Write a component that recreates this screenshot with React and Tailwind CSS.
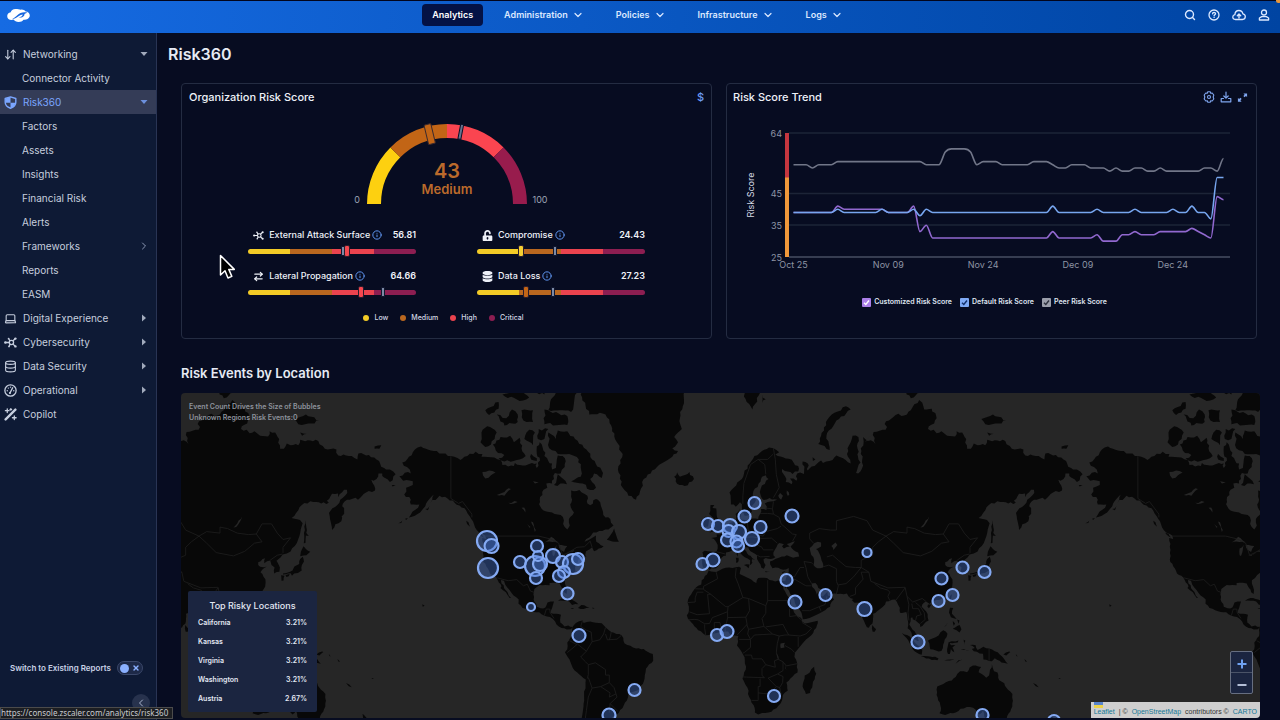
import React, { useState } from 'react';
import { ArrowDownUp, ArrowRightLeft, ChevronDown, ChevronLeft, ChevronRight, Database, Info, Laptop, Search, X } from 'lucide-react';
import { FaDatabase, FaUnlockAlt } from 'react-icons/fa';

/* ---------- icons ---------- */

function ZLogo() {
  return (
    <svg viewBox="0 0 24 16" className="h-4 w-6">
      <path
        fill="#fff"
        d="M9.500 1C6.800 1 5.200 2.400 4.700 4.200 2.600 4.500 1.200 6 1.200 8c0 2.500 1.800 4 4.300 4 .8 0 1.500-.2 2.100-.5.9 1.600 2.800 2.500 5 2.500 2.200 0 3.900-.8 4.900-2.200 3.300.1 6.300-1.400 6.300-4.300 0-2.300-1.800-4-4.200-4C18.300 2 16.700 1.300 14.900 1.700 13.500 1.200 11.600 1 9.500 1z"
      />
      <path fill="#1767df" d="M21.500 4.700c-4.200-1-7.700.1-10.200 2.600-1.500 1.500-3 2.800-5.300 4 2.900-.5 5-1.700 6.900-3.300 1.200-1 2.400-1.500 3.900-1.600-.3 1.500-1.800 2.500-4.300 3.200 3.300.2 6-.9 6-3.700 1-.6 1.800-.9 3-1.200z" />
    </svg>
  );
}

function ShieldIcon({ className }) {
  return (
    <svg viewBox="0 0 12 12" className={className} fill="none" stroke="currentColor">
      <path d="M6 .8 10.900 2.300v3.500c0 2.700-1.900 4.500-4.900 5.500C3 10.300 1.100 8.500 1.100 5.800V2.300z" strokeWidth="1.300" strokeLinejoin="round" />
      <path d="M6 1v5.200H1.300V2.500zM6 6.200h4.600C10.300 8.600 8.600 10.200 6 11z" fill="currentColor" stroke="none" />
    </svg>
  );
}

function NodesIcon({ className }) {
  return (
    <svg viewBox="0 0 14 12" className={className} fill="none" stroke="currentColor" strokeWidth="1.400">
      <circle cx="8" cy="6" r="2.300" />
      <path d="M1.500 6h4.300M9.500 4.400 12 2M9.500 7.600l2.500 2.300M6.600 4.300 5.200 2.300M6.700 7.700 5.600 9.800" />
      <g fill="currentColor" stroke="none">
        <circle cx="1.500" cy="6" r="1.400" />
        <circle cx="12.300" cy="1.800" r="1.300" />
        <circle cx="12.300" cy="10.200" r="1.300" />
        <circle cx="5" cy="1.900" r="1" />
        <circle cx="5.400" cy="10.200" r="1" />
      </g>
    </svg>
  );
}

function DialIcon({ className }) {
  return (
    <svg viewBox="0 0 12 12" className={className} fill="none" stroke="currentColor" strokeLinecap="round">
      <circle cx="6" cy="6" r="5.200" strokeWidth="1.200" />
      <path d="M5.500 8.300 8 3.500M3 6.300h.01M4 3.800h.01M6 2.900h.01M9 6.300h.01" strokeWidth="1.300" />
      <circle cx="5.500" cy="8.300" r="1" fill="currentColor" stroke="none" />
    </svg>
  );
}

function WandIcon({ className }) {
  return (
    <svg viewBox="0 0 12 12" className={className} fill="none" stroke="currentColor" strokeLinecap="round">
      <path d="M1.500 10.500 10.500 1.500" strokeWidth="2.200" />
      <path d="M3 .8v3.400M1.300 2.500h3.400M9.500 7.300v3.400M7.800 9h3.400M6.300.6v1.400M5.600 1.300H7" strokeWidth="1.200" />
    </svg>
  );
}

function HelpIcon({ className }) {
  return (
    <svg viewBox="0 0 12 12" className={className} fill="none" stroke="currentColor" strokeLinecap="round">
      <circle cx="6" cy="6" r="5" strokeWidth="1.300" />
      <path d="M4.600 4.800c0-1.900 2.900-1.800 2.900-.1 0 1-1.400 1.100-1.400 2.100M6.100 8.400h.01" strokeWidth="1.400" />
    </svg>
  );
}

function CloudUpIcon({ className }) {
  return (
    <svg viewBox="0 0 14 12" className={className} fill="none" stroke="currentColor" strokeWidth="1.300" strokeLinecap="round" strokeLinejoin="round">
      <path d="M3.500 10.500C1.900 10.500.8 9.500.8 8.100c0-1.300.9-2.200 2.100-2.400C3 3.300 4.600 1.500 6.900 1.500c2.100 0 3.600 1.300 4 3.300 1.500.3 2.400 1.400 2.400 2.800 0 1.700-1.200 2.900-2.900 2.900z" />
      <path d="M7 9V5.200M5.300 6.700 7 5l1.700 1.700" strokeWidth="1.400" />
    </svg>
  );
}

function UserIcon({ className }) {
  return (
    <svg viewBox="0 0 12 12" className={className} fill="none" stroke="currentColor" strokeWidth="1.300" strokeLinejoin="round">
      <circle cx="6" cy="3.500" r="2.500" />
      <path d="M3.700 7.600h4.600l2.300 1.400v2H1.400V9z" />
    </svg>
  );
}

function GearIcon({ className }) {
  return (
    <svg viewBox="0 0 12 12" className={className} fill="none" stroke="currentColor" strokeWidth="1.100" strokeLinejoin="round">
      <path d="M4.800.8h2.400l.5 1.400 1.500-.2 1.600 2L10.200 6l.6 2-1.600 2-1.500-.2-.5 1.400H4.800l-.5-1.400-1.500.2-1.600-2 .6-2-.6-2 1.600-2 1.500.2z" />
      <circle cx="6" cy="6" r="1.500" />
    </svg>
  );
}

function DownloadIcon({ className }) {
  return (
    <svg viewBox="0 0 12 12" className={className} fill="none" stroke="currentColor" strokeWidth="1.200" strokeLinecap="round" strokeLinejoin="round">
      <path d="M6 1v6M3.800 5 6 7.200 8.200 5M3.500 7.500H1.200v3.300h9.600V7.500H8.500" />
    </svg>
  );
}

function ExpandIcon({ className }) {
  return (
    <svg viewBox="0 0 12 12" className={className}>
      <path fill="currentColor" d="M7 1.500h4v4L9.700 4.300 8.300 5.700 6.900 4.300 8.300 2.900zM5 10.500H1v-4l1.300 1.200 1.400-1.400 1.400 1.400L3.700 9.100z" />
    </svg>
  );
}

/* ---------- header ---------- */

const MENUS = ['Administration', 'Policies', 'Infrastructure', 'Logs'];

function Header() {
  return (
    <header className="flex h-[33px] items-center border-t border-[#02051c] bg-linear-to-r from-[#166be3] to-[#0044a2] px-1.5 pb-[5px] text-[#dbe8ff]">
      <div className="flex-1">
        <a href="#home" aria-label="Home" className="inline-block align-middle">
          <ZLogo />
        </a>
      </div>
      <nav className="flex items-center gap-[10px] text-[9px] font-semibold">
        <button className="h-[22px] rounded bg-[#041245] px-[10px] text-white">Analytics</button>
        {MENUS.map((m) => (
          <button key={m} className="flex h-[22px] items-center gap-1 px-[11px]">
            {m}
            <ChevronDown size={12} strokeWidth={2.4} />
          </button>
        ))}
      </nav>
      <div className="flex flex-1 items-center justify-end gap-3 pr-1">
        <button aria-label="Search"><Search size={12} strokeWidth={2.8} /></button>
        <button aria-label="Help"><HelpIcon className="size-3" /></button>
        <button aria-label="Upload"><CloudUpIcon className="h-3 w-[14px]" /></button>
        <button aria-label="Account"><UserIcon className="size-3" /></button>
      </div>
    </header>
  );
}

/* ---------- sidebar ---------- */

const NAV = [
  { label: 'Networking', icon: ArrowDownUp, caret: 'down' },
  { label: 'Connector Activity', sub: true },
  { label: 'Risk360', icon: ShieldIcon, caret: 'down', active: true },
  { label: 'Factors', sub: true },
  { label: 'Assets', sub: true },
  { label: 'Insights', sub: true },
  { label: 'Financial Risk', sub: true },
  { label: 'Alerts', sub: true },
  { label: 'Frameworks', sub: true, caret: 'chevron' },
  { label: 'Reports', sub: true },
  { label: 'EASM', sub: true },
  { label: 'Digital Experience', icon: Laptop, caret: 'right' },
  { label: 'Cybersecurity', icon: NodesIcon, caret: 'right' },
  { label: 'Data Security', icon: Database, caret: 'right' },
  { label: 'Operational', icon: DialIcon, caret: 'right' },
  { label: 'Copilot', icon: WandIcon },
];

function Caret({ kind }) {
  if (kind === 'chevron') return <ChevronRight size={12} className="text-[#8d99b5]" />;
  return (
    <svg viewBox="0 0 8 8" className="mr-0.5 size-2" fill="currentColor" opacity=".8">
      {kind === 'down' ? <path d="M.5 2h7L4 6z" /> : <path d="M2 .5v7L6 4z" />}
    </svg>
  );
}

function Sidebar() {
  const [existing, setExisting] = useState(false);
  return (
    <aside className="relative flex w-[157px] shrink-0 flex-col border-r border-[#293454] bg-[#0e1a35] pt-[9px]">
      <nav>
        {NAV.map(({ label, icon: Icon, caret, active, sub }) => (
          <a
            key={label}
            href={'#' + label}
            className={
              'flex h-6 items-center pr-1.5 pl-1 text-[10px] ' +
              (active ? 'bg-[#343c57] text-[#7ba6ff]' : 'text-[#c6cede]')
            }
          >
            {!sub && <Icon className="mr-[6px] h-[13px] w-[13px]" />}
            <span className={'flex-1 ' + (sub ? 'pl-[18px]' : '')}>{label}</span>
            {caret && <Caret kind={caret} />}
          </a>
        ))}
      </nav>
      <label className="mt-auto mb-11 flex h-4 items-center gap-1.5 pl-[10px] text-[8px] font-semibold text-[#c9d2e6]">
        Switch to Existing Reports
        <span className="relative flex h-[14px] w-[26px] items-center rounded-full border border-[#3a4769] bg-[#1d2948]">
          <input
            type="checkbox"
            role="switch"
            checked={existing}
            onChange={(e) => setExisting(e.target.checked)}
            className="ml-0.5 size-[9px] appearance-none rounded-full bg-[#8ab0ff]"
          />
          <X size={8} strokeWidth={4} className="ml-[3px] text-[#8ab0ff]" />
        </span>
      </label>
      <button
        aria-label="Collapse menu"
        className="absolute right-1.5 bottom-2 flex size-[18px] items-center justify-center rounded-full bg-[#27324d] text-[#aab4cc]"
      >
        <ChevronLeft size={12} />
      </button>
    </aside>
  );
}

/* ---------- organization risk score ---------- */

const GX = 447;
const GY = 204;

function polar(pct, r) {
  const a = Math.PI * (1 - pct / 100);
  return [GX + r * Math.cos(a), GY - r * Math.sin(a)];
}

function arc(from, to) {
  const [x1, y1] = polar(from, 73);
  const [x2, y2] = polar(to, 73);
  return `M${x1} ${y1}A73 73 0 0 1 ${x2} ${y2}`;
}

function Gauge() {
  return (
    <svg viewBox="327 110 240 100" className="h-[100px] w-60 font-['Inter',sans-serif]">
      <g fill="none" strokeWidth="14">
        <path d={arc(0, 25)} stroke="#fdd010" />
        <path d={arc(25, 50)} stroke="#c26516" />
        <path d={arc(50, 75)} stroke="#fa4550" />
        <path d={arc(75, 100)} stroke="#981c4d" />
      </g>
      <g transform={`rotate(${42.5 * 1.8 - 90} ${GX} ${GY})`}>
        <rect x={GX - 4} y={GY - 82} width="7" height="20" rx="1" fill="#c26516" stroke="#3b2a2e" />
      </g>
      <g transform={`rotate(${56 * 1.8 - 90} ${GX} ${GY})`}>
        <rect x={GX - 1.5} y={GY - 81} width="3" height="15" fill="#64748f" stroke="#0a0f26" />
      </g>
      <text x={GX} y="178" textAnchor="middle" fontSize="20" fontWeight="600" fill="#bb6a2b">43</text>
      <text x={GX} y="194" textAnchor="middle" fontSize="13" fontWeight="600" fill="#bb6a2b">Medium</text>
      <text x="357" y="203" textAnchor="middle" fontSize="9" fill="#9ba3b4">0</text>
      <text x="540" y="203" textAnchor="middle" fontSize="9" fill="#9ba3b4">100</text>
    </svg>
  );
}

const FACTORS = [
  { name: 'External Attack Surface', icon: NodesIcon, value: '56.81', mark: 59, peer: 56.5, color: '#f5474f' },
  { name: 'Compromise', icon: FaUnlockAlt, value: '24.43', mark: 26.5, peer: 46.5, color: '#f5d033' },
  { name: 'Lateral Propagation', icon: ArrowRightLeft, value: '64.66', mark: 67, peer: 80.5, color: '#f5474f' },
  { name: 'Data Loss', icon: FaDatabase, value: '27.23', mark: 29, peer: 45.5, color: '#c26516' },
];

function FactorBar({ name, icon: Icon, value, mark, peer, color }) {
  return (
    <div>
      <div className="flex h-4 items-center pl-[5px] text-[9px] font-medium text-[#eef1f8]">
        <Icon strokeWidth="2.6" className="mr-[5px] size-[11px]" />
        {name}
        <Info size={10} strokeWidth={2.4} className="ml-[2px] text-[#5f94ee]" />
        <span className="ml-auto font-semibold">{value}</span>
      </div>
      <div className="relative mt-0.5 flex h-3 items-center">
        <div className="flex h-[5px] w-full overflow-hidden rounded-full">
          <div className="flex-1 bg-[#f3cb26]" />
          <div className="flex-1 bg-[#b9671f]" />
          <div className="flex-1 bg-[#ea434e]" />
          <div className="flex-1 bg-[#8c1e51]" />
        </div>
        <span className="absolute h-[10px] w-1 -translate-x-1/2 border border-[#10162e] bg-[#7c8aa5]" style={{ left: peer + '%' }} />
        <span
          className="absolute h-3 w-[6px] -translate-x-1/2 rounded-[2px] border border-[#2a1c2c]"
          style={{ left: mark + '%', background: color }}
        />
      </div>
    </div>
  );
}

const LEVELS = [
  ['Low', 'bg-[#f3cb26]'],
  ['Medium', 'bg-[#b9671f]'],
  ['High', 'bg-[#ea434e]'],
  ['Critical', 'bg-[#8c1e51]'],
];

function RiskScoreCard() {
  return (
    <section className="flex min-h-64 flex-col items-center rounded border border-[#242c42]">
      <div className="flex h-[26px] w-full items-center justify-between px-[7px]">
        <h2 className="text-[11px] font-medium text-[#eef1f8]">Organization Risk Score</h2>
        <button aria-label="Financial view" className="text-[11px] font-medium text-[#6d9bf5]">$</button>
      </div>
      <Gauge />
      <div className="mt-[17px] grid w-3/4 grid-cols-2 gap-x-[61px] gap-y-[11px]">
        {FACTORS.map((f) => (
          <FactorBar key={f.name} {...f} />
        ))}
      </div>
      <ul className="mt-[14px] flex h-3 items-center gap-3 pr-1.5 text-[7px] font-medium text-[#d3d8e4]">
        {LEVELS.map(([name, dot]) => (
          <li key={name} className="flex items-center gap-[5px]">
            <span className={'size-[6px] rounded-full ' + dot} />
            {name}
          </li>
        ))}
      </ul>
    </section>
  );
}

/* ---------- risk score trend ---------- */

// [value, number of days it holds]
const PEER = [[54, 3], [53, 1], [54, 3], [55, 14], [54, 3], [58, 1], [59, 3], [58, 1], [54, 1], [55, 3], [54, 5], [55, 3], [54, 1], [53, 2], [54, 3], [53, 3], [52, 1], [53, 1], [52, 2], [53, 2], [52, 2], [53, 1], [52, 6], [53, 2], [52, 1], [56, 1]];
const DEFAULT = [[39, 7], [40, 1], [39, 6], [40, 1], [39, 4], [40, 1], [38, 1], [40, 1], [39, 19], [41, 1], [39, 6], [40, 1], [39, 5], [40, 1], [39, 5], [40, 1], [39, 2], [41, 1], [39, 2], [37, 1], [50, 2]];
const CUSTOM = [[39, 7], [41, 1], [40, 7], [39, 4], [41, 1], [33, 1], [35, 1], [31, 19], [33, 1], [31, 6], [32, 1], [30, 3], [32, 2], [33, 1], [32, 3], [33, 5], [34, 1], [33, 1], [32, 1], [31, 1], [44, 1], [43, 1]];

const yOf = (v) => 133 + (64 - v) * 3.18;

function linePath(runs) {
  const ys = runs.flatMap(([v, n]) => Array(n).fill(yOf(v)));
  const step = 430 / (ys.length - 1);
  const slope = ys.map((y, i) => {
    const a = y - ys[i - 1];
    const b = ys[i + 1] - y;
    return a * b > 0 ? (a + b) / 2 : 0;
  });
  let d = `M793.5 ${ys[0]}`;
  for (let i = 1; i < ys.length; i++) {
    const x = 793.5 + i * step;
    d += `C${x - (step * 2) / 3} ${ys[i - 1] + slope[i - 1] / 3} ${x - step / 3} ${ys[i] - slope[i] / 3} ${x} ${ys[i]}`;
  }
  return d;
}

function TrendChart() {
  return (
    <svg viewBox="727 110 529 174" className="w-full font-['Inter',sans-serif]">
      <path d="M789 133H1230M789 193.500H1230M789 225H1230" stroke="#1c2437" strokeWidth="1.500" />
      <path d="M789 257H1230" stroke="#474e62" strokeWidth="1.500" />
      <path d="M787 133V178" stroke="#c5363f" strokeWidth="4" />
      <path d="M787 177.500V257" stroke="#f0983a" strokeWidth="4" />
      <g fontSize="9" fill="#8e95a5">
        {[64, 45, 35, 25].map((v) => (
          <text key={v} x="782" y={yOf(v) + 3.5} textAnchor="end">{v}</text>
        ))}
        {['Oct 25', 'Nov 09', 'Nov 24', 'Dec 09', 'Dec 24'].map((t, i) => (
          <text key={t} x={793.5 + i * 94.8} y="268" textAnchor="middle">{t}</text>
        ))}
      </g>
      <text transform="translate(754 195) rotate(-90)" textAnchor="middle" fontSize="9" fill="#d5d9e3">Risk Score</text>
      <g fill="none" strokeWidth="1.600" strokeLinejoin="round">
        <path d={linePath(PEER)} stroke="#717688" />
        <path d={linePath(CUSTOM)} stroke="#9168cf" />
        <path d={linePath(DEFAULT)} stroke="#77a6ef" />
      </g>
    </svg>
  );
}

const SERIES = [
  { name: 'Customized Risk Score', box: 'bg-[#ab7fe8]', tick: '#fff' },
  { name: 'Default Risk Score', box: 'bg-[#7faaf5]', tick: '#12306b' },
  { name: 'Peer Risk Score', box: 'bg-[#9a9eaa]', tick: '#2c303c' },
];

function TrendCard() {
  return (
    <section className="min-h-64 rounded border border-[#242c42]">
      <div className="flex h-[26px] items-center px-[6px]">
        <h2 className="flex-1 text-[11px] font-medium text-[#eef1f8]">Risk Score Trend</h2>
        <div className="flex items-center gap-[5px] pr-[2px] text-[#7fa5ee]">
          <button aria-label="Settings"><GearIcon className="size-3" /></button>
          <button aria-label="Download"><DownloadIcon className="size-3" /></button>
          <button aria-label="Expand"><ExpandIcon className="size-[11px]" /></button>
        </div>
      </div>
      <TrendChart />
      <div className="mt-2 flex h-5 items-center justify-center gap-2 pr-[14px] text-[7px] font-semibold text-[#dfe4f0]">
        {SERIES.map((s) => (
          <label key={s.name} className="relative flex items-center gap-[3px]">
            <input type="checkbox" defaultChecked className={'size-[9px] appearance-none rounded-[1px] ' + s.box} />
            <svg viewBox="0 0 9 9" className="pointer-events-none absolute left-0 size-[9px]" fill="none" stroke={s.tick} strokeWidth="1.400">
              <path d="M2 4.800 3.800 6.500 7 2.500" />
            </svg>
            {s.name}
          </label>
        ))}
      </div>
    </section>
  );
}

/* ---------- map ---------- */

// Outlines as "lon,lat" pairs
const LAND = [
  // Europe and Asia
  '25.7,71.1 28,71 31,70.3 29,69.9 33,69.4 36,69.1 41,67.7 41,66.6 38,66.1 34,66.7 32.5,67.1 34.8,65 34.5,64.3 37.5,63.8 38,64.3 36.7,65.1 40,64.6 40.5,65 39.8,65.6 42,66.4 44,66.1 44.1,67 43.3,68.6 46,68.2 46.5,67.8 45.5,67.1 46,66.8 48,67.6 53,68.8 54,68.3 59,68.9 61,69.7 64.5,69.2 68.5,68.2 67,69.5 66.8,71 68.5,72 69.5,73 72.5,72.8 72.8,72.2 71.8,71.4 72.7,70.4 72.5,69 73.6,68.4 71.3,66.3 72.4,66.2 75,67.8 74.5,69 73.8,71 75.3,72.1 75,72.8 77.5,72.2 79,72.3 81.5,71.7 80.5,73.6 86.8,73.9 87,75.1 92,75.9 98,76 100,76.5 101,76.9 104.4,77.7 106,77.4 107,76.6 111,76.7 113.5,75.5 109,74 112,73.9 113.5,73.4 116,73.7 119,73 123.2,72.9 124,73.7 126.9,73.5 129,72.5 128.5,71.9 129.5,70.9 131.5,70.9 133,71.8 135,71.5 139,71.5 140,72.4 144,72.3 149.5,72.2 152.9,70.9 159,70.8 160,69.7 164,69.7 167,69.6 170,69 170.5,70.1 176,69.8 180,69 184,67.3 185,67 187,67 190,66 187,64.3 184,65.3 183,66.2 181,66.2 180,65 178.5,64.6 177.3,64.8 179.3,62.8 179.2,62.3 174.5,61.8 170.3,60 169,60.5 166,60 163.3,59.5 162,58.2 163,57.7 163.1,56.1 161.7,55.3 162,54.9 160.1,53.2 158.4,52.9 156.7,51 155.5,55.4 156,57 158.3,58 161,60 163.6,61.1 164.5,62.5 163,62.5 160,60.6 159.8,61.6 156.7,61.5 154,59.7 155,59.2 151,59 148.5,59.4 142.2,59.1 139,57.1 135.5,54.8 139.9,54.2 141.3,53.2 140,50 138.2,46.5 135,43.4 133,42.7 130.8,42.3 129.7,41.1 127.6,39.8 129.4,37 129.1,35.2 126.4,34.4 126.6,37 125,38 124.3,39.9 121.2,38.8 121.6,40.8 118,39.2 118,38 119,37.3 122.4,37.3 119.2,35 120.2,34.3 121.8,31.9 121.9,30.5 121.6,28.5 118.7,24.5 116,22.8 113.5,22.2 110.5,21.2 109.9,20.3 108,21.6 106,20 105.7,19 108.8,15.3 109.3,12 107,10.4 105,8.6 104.8,10.1 102.5,12 101,12.7 100.9,13.5 100,13.4 99.2,10 100.3,8.3 102,6.5 103.4,4.5 104.2,1.3 103.5,1.3 101.3,2.8 100.4,5.5 98.3,8 98.6,11 97.6,16.3 95.3,15.8 94.3,16 94.2,18.5 91.8,22.5 88.5,21.7 87,21.5 86.5,20 82.3,16.7 80.2,15.5 80.2,13 79.8,10.3 78,8.3 77,8.5 76,10.5 74.8,13 73,17 72.8,21 70.5,20.9 69,22.3 70,22.8 67.4,24 66.5,25.4 61.5,25.1 57.5,25.7 56.5,27.1 54.5,26.6 51.5,27.9 50,30.2 48,30 48.3,28.4 50.1,26.6 50.8,24.8 51.2,26 51.6,24.6 52,24 54,24.1 56.3,26.2 56.5,24.4 58.7,23.6 59.8,22.5 57.8,20 57.7,19 55.3,17.3 52,15.6 48.7,14 45,12.8 43.4,12.7 42.7,16 39.2,21 38,24 35,28 34.9,29.4 34.3,27.8 32.6,29.9 32.3,31.2 34.2,31.3 35.5,34 36,36.8 33,36.1 30.6,36.9 27.5,36.7 26.3,38.3 26.2,39.5 29,40.5 31.2,41.1 35,42 38.3,41 41.5,41.5 41,43 37.5,44.7 37,45.3 39.3,47.2 35,46.2 36.5,45.3 33.5,44.5 32.5,45.4 33.5,46.1 31,46.6 29.7,45.2 28,43 28,42 29,41.2 26.5,40.5 24,40.9 22.8,40.4 23.9,38 23,36.5 21.7,36.9 21.2,38.3 19.4,40.5 19.4,42 16,43.5 14.8,45 13.6,45 12.4,45.4 12.3,44.3 13.7,43.6 15,42 16,41.8 18.4,40.1 17,40.5 16.6,39.7 17,39 16,38 15.7,38.3 15.8,40 13,41.2 10.5,42.9 9,44.4 7.5,43.8 5,43.3 3.1,43 3.2,41.9 0.8,41 -0.3,39.5 0.2,38.7 -0.8,37.7 -2.1,36.7 -4.5,36.7 -5.5,36 -6.4,36.9 -8.9,37 -9.4,38.7 -8.7,41 -9.2,43.1 -8,43.7 -1.8,43.4 -1.2,45.8 -2.5,47.4 -4.6,48.3 -1.6,48.7 -1.8,49.6 0,49.5 1.6,50.8 4.5,52.3 5,53.3 8.5,53.7 8.2,56 10.5,57.7 10.8,56.3 10,54.5 12.5,54.3 14.2,54 18.5,54.7 20,54.5 21,56 21.5,57.5 24.3,57.2 23.5,59 28,59.6 30,60 26,60.4 22.9,59.9 21.4,61 21.4,62.8 25.4,65 24,65.8 22,65.5 21.3,64.4 17.5,62.2 17.2,60.7 18.9,59.9 16.5,57.5 15.9,56.2 14.3,55.5 12.9,55.5 11.5,58 10.5,59.3 8.3,58.1 5.7,58.7 5,61.8 8.5,63.5 11.5,65 14.5,67.8 18,69.6 22,70.5',
  // Africa
  '-5.9,35.8 -2,35.1 3,36.9 10,37.3 11,36.8 10.3,34.2 15.3,32.3 19,30.3 20,32.5 23,32.6 29,30.9 32.3,31.2 32.6,29.9 34,26.5 35.6,23.9 37.2,21 37.5,18.6 39.7,15 43.1,12.6 42.8,11.6 44.5,10.5 51.2,11.9 50.8,9.5 48,4.5 44,1 41.5,-2 39.3,-4.7 39,-7 40.5,-10.7 40.6,-15 36.9,-18 34.8,-20 35.5,-24 32.9,-26 32.5,-28.5 30.5,-31 27,-33.6 22,-34.1 20,-34.8 18.3,-34 18.2,-32 15.3,-27 14.4,-22.5 11.8,-18 13.7,-12 13,-8.5 12.2,-6 8.9,-1 9.5,1 9.6,4 6,4.3 4.3,6.3 1,5.9 -4,5.2 -7.6,4.4 -11.5,7 -13.3,9 -15,11 -16.8,13 -17.4,14.7 -16.3,17 -16.3,19 -17,21 -16,24 -14.5,26 -12.9,28 -9.8,29.6 -9.6,31.5 -6.8,34',
  '49.3,-12 50.4,-15.6 47.2,-25 45,-25.5 43.3,-22 44.4,-16.5 47,-15',
  // North America
  '-168,65.6 -163.5,66.5 -162,66.2 -164,67.5 -166.5,68.4 -163,69.5 -161,70.3 -156.7,71.3 -150,70.5 -141,69.6 -136,68.9 -134,69.5 -128,70.4 -124.5,70 -125,69.5 -120,69.4 -115,68.9 -114,67.9 -108,67.7 -107.5,68.3 -102,67.8 -98.5,68.3 -96,68.2 -96,67.3 -94.5,69.3 -96,70 -96,71.3 -94.5,72 -91.5,70.2 -92,69.6 -90,68.7 -88,68.2 -88,67 -86,67.3 -85.5,69 -85,69.7 -82.5,69.6 -81.3,69.2 -81.4,67.5 -83.5,66.2 -86.5,66.3 -87,65 -88,64 -91,64 -90.5,63 -92.5,62.5 -94.5,60 -94.8,58.8 -92.5,57 -88,56.5 -82.3,55.1 -82.2,53 -80,51.2 -78.7,52.5 -79.2,54.5 -76.5,56.5 -78.5,58.7 -77.5,60 -78,62.3 -73.7,62.4 -69.5,61 -69.5,59 -68,58.5 -65,60.2 -64,60 -61.8,57.5 -60,55 -57.5,54.5 -55.8,52.5 -58.5,51.2 -66.5,50.2 -71,47 -65,49.2 -64.8,47 -61,45.4 -66,43.5 -67,45 -70.2,43.5 -70.7,42 -70,41.6 -74,40.7 -74.5,39.3 -76,37 -75.7,35.3 -78.5,33.8 -81.3,31.5 -80.2,27 -80.4,25.2 -81.7,26 -82.8,28 -84,30 -86,30.4 -89.3,30.2 -89.3,29.2 -91.5,29.4 -94.5,29.4 -97.3,27.5 -97.7,22.5 -96,19 -94,18.2 -91.5,18.6 -90.4,21 -87,21.5 -88,18.3 -88.8,15.8 -83.3,15 -83.7,11 -81.5,9 -79.5,9.5 -77.3,8.6 -78,7.5 -80.3,7.4 -83,8.2 -85.7,10 -87.7,12.9 -92.2,14.5 -94.7,16.2 -99,16.7 -103.5,18.3 -105.6,20.4 -105.5,22.5 -109.3,25.7 -112.5,29.5 -113.2,31.3 -114.8,31.6 -114.5,30 -111.3,26 -109.5,23.2 -110.2,23.2 -112.2,26 -115,28 -114.5,28.8 -115.9,30.5 -117.2,32.7 -120.5,34.5 -122.5,37.5 -124.3,40.4 -124,46.3 -124.6,48.3 -122.5,48 -123,49.2 -127.5,51 -130.3,54.5 -133,57 -136.5,58.4 -140,59.8 -147,61 -151.7,59.2 -150,61.3 -154,59 -158.5,56 -163,55 -162,55.8 -157.5,58.7 -162,58.7 -162,60 -165.5,61.3 -164.5,63 -161,63.6 -161,64.5 -166,64.6',
  // Arctic islands
  '-117.5,70.6 -113,69.8 -116,69.2 -113,68.6 -105,69 -101.8,69.6 -104,71 -105,72.7 -108,72 -110,73 -115,72.8 -119,71.6',
  '-123,71.2 -120,71.6 -117,73.5 -122,74.4 -125,73.5 -125.5,72',
  '-85,73.8 -80,73.7 -76,72.5 -70,70.8 -67,69 -62,66.8 -62,65.2 -66,66.2 -68,65 -65,63 -68,62.4 -72,64 -78,64.5 -73,65.5 -73,67.5 -74,69 -79,70 -85,70 -89.5,71 -90,73.5 -86,72.5',
  '-85,66 -80.2,63.8 -87,63.6',
  '-95,74 -90,74 -92,72.5 -95.5,72.5',
  '-100,73.9 -97,73.5 -98,71.5 -102.5,72.5',
  '-99,70 -96,69.2 -96,68.7 -99,69',
  '-92,76.6 -80,75.8 -80,74.6 -92,74.7',
  '-117,76 -112,75.5 -109,76.6 -106,76 -106,75 -113,74.5',
  '-123,76.5 -116,77.5 -116,76.7 -121,75.9',
  '-90,76.5 -78,76.3 -75,78.5 -70,80 -90,81 -86,78.5 -89,77.5',
  '-104,76.5 -98,76.5 -98,75 -103,75.2',
  '-114,78.3 -105,79 -100,78 -105,77.6',
  '-97,80 -88,80 -92,78.3 -96,78.5',
  '-73,78.3 -68.5,76 -63,76.2 -60,76 -57,74.5 -55,72.5 -51,70 -53.5,67 -51,63 -48,61 -44,60 -42,62 -40,65 -33,67.5 -25,69.5 -22,70.5 -25,71 -22,72 -24,72.8 -20,74 -21,75.5 -19.5,77 -18,79 -20,82 -60,82',
  '-24,65.5 -22.5,66.4 -21,65.5 -16,66.5 -13.7,65 -18.5,63.4 -22.5,63.9',
  '11,79.6 20,80 21,78.5 17,76.6 14,77.5',
  '22,78.3 24,77.8 22,77.4',
  '57.5,70.7 51.5,71.7 53,73 55.5,75 60,76.2 66,77 68.5,76.6 61,75.2 57,73.8 55.8,73 57,71.7',
  '92,80 100,79.9 105,78.5 100,77.9 95,79',
  '137,75.4 143,76 150,75.2 146,74.8 139,74.7',
  '140,73.5 143.5,73.3 141,73',
  '179,71.3 182.5,71.5 181.5,70.9 179,70.9',
  '48.5,69.4 50,69 48.7,68.7',
  '-59.3,47.7 -55.5,51.5 -53,47 -55,47',
  '-128,50.7 -125,49.8 -123.5,48.4 -126,49.5',
  '-133,54 -131.8,53.5 -131,52.1 -132.5,53',
  '-154.5,57.5 -152.3,58.2 -153,57.1',
  '-165,54.6 -163.5,54.8 -164.5,54.2',
  '-168.5,53.2 -166.5,54 -167,53.3',
  '-172,63.6 -169,63.3 -171.5,63.3',
  // Caribbean, Hawaii
  '-84.9,21.9 -82,23.2 -78,22.5 -74.2,20.2 -77.5,19.9 -79,21.6',
  '-74.4,18.4 -72.7,19.9 -68.4,18.6 -71.5,17.8',
  '-78.3,18.4 -76.3,18.2 -77.5,17.8',
  '-67.2,18.5 -65.7,18.4 -66.5,18',
  '-156,20.2 -154.8,19.5 -155.8,19',
  // South America
  '-77.3,8.6 -75.5,10.7 -72,12 -71.5,10.8 -68,11.5 -62,10.6 -57,6 -51.5,4.2 -50,0 -44,-2.5 -40,-2.8 -35.2,-5.5 -35,-9 -38.8,-13 -39.5,-18 -42,-23 -48,-25.5 -48.8,-28.5 -53,-34 -57,-36.5 -57,-40 -73.5,-40 -71.5,-30 -70.3,-18.5 -76.2,-14 -79.8,-7 -81.3,-4.5 -80,-3 -80,0.5 -77.5,4 -77.5,7',
  // British Isles
  '-5.5,50.1 1.3,51.1 1.6,52.7 -1.5,55 -2,57.6 -4,57.7 -3,58.6 -5,58.6 -5.7,56 -3,54.5 -4.5,53 -5,51.8 -3,51.3',
  '-10,51.7 -6.3,52.2 -5.7,54.6 -7.5,55.3 -10,54',
  // Mediterranean
  '12.5,38 15.5,38.2 15,36.7',
  '8.3,41 9.7,41 9.5,39.2 8.4,39',
  '8.6,42.5 9.4,43 9.3,41.4',
  '23.6,35.5 26.2,35.2 24,35',
  '32.4,35 34.5,35.6 33,34.6',
  // Far East
  '142.5,54.2 143.2,52 143.2,50 144.5,49 143,49.2 142.8,46.6 141.9,46.5 142,50',
  '140,41.6 140.4,43.3 141.8,45.4 143,44.3 145.3,43.3 143.2,42',
  '141.4,41.4 142,39.5 140.9,38 140.8,35.8 138.8,34.7 136.8,34.4 135.7,33.5 135,34.6 131,34 131,34.5 136,35.7 137,37.4 139.5,38.5 140,40.5',
  '130,33.7 131.8,33.5 131.3,31.4 130.2,31.3',
  '132.3,33.8 134.5,34.2 134,33.3 132.8,32.9',
  '121.5,25.2 120.8,22 120.1,23.3',
  '109,20 110.7,20 109.5,18.2 108.7,19',
  '79.8,9.7 81.8,7.5 81,6.2 80,6.2',
  // Philippines, Indonesia, New Guinea
  '120.5,18.5 122.2,18.4 121.5,15.5 124,12.8 121,13.7 120,16',
  '122,11.7 123.2,10.5 122.5,9.3',
  '124.3,12.5 125.5,12 125,10.3',
  '122,7.8 125.5,9.7 126.5,7.3 125.5,5.8 124,7',
  '117.2,8.4 119.5,11.3 118.5,9.5',
  '95.3,5.6 98,4.5 103.8,-1 106,-3.3 105.7,-5.8 102,-4 98.7,1.7',
  '105.3,-6.6 108.5,-6.6 112.7,-6.9 114.5,-7.8 114,-8.7 108,-7.8',
  '109,1.5 109.7,2 111.3,2.6 113,3.3 117,7 119.2,5.2 117.7,2 117.5,0.8 116,-3.8 114.5,-4.1 110.2,-3',
  '119.8,0.7 125,1.6 124.5,0.5 120.3,0.4 121,-0.9 123.3,-0.7 121.8,-2 122.8,-4.5 121,-2.8 120.4,-5.5 119.5,-5.4 119,-3',
  '127.7,2 128.6,1.5 128,-0.8',
  '126.1,-3.3 130.8,-3.5 128,-3.3',
  '116,-8.4 119,-8.4 122.9,-8.3 119,-8.9',
  '123.5,-10.3 127,-8.4 125,-8.7',
  '131,-0.8 134,-0.9 135,-3.3 138,-1.7 141,-2.6 145.5,-4.5 147.8,-6.7 150.8,-10.5 147.5,-9.8 144,-7.7 142.5,-9.2 138,-8.3 137.8,-5.3 133,-4 132,-2.8 133.5,-2.3',
  '148.5,-5.7 151.5,-4.2 152.1,-4.4 150,-6.3',
  '155,-5.5 156,-6.8 155.3,-6.5',
  '159.5,-8 161,-9.5 160,-9.3',
  '164,-20.2 167,-22.3 165.5,-21.8',
  '177.3,-17.8 178.6,-17.9 178,-18.3',
  // Australia, New Zealand
  '142.5,-10.8 143.6,-14.3 145.4,-15 146.3,-18.9 149,-20.3 150.9,-23.5 153.2,-25.5 153.5,-28.7 152.5,-32.5 150.5,-35.5 150,-38 140,-39 138.5,-35.7 137.8,-33 136,-34.8 134,-32.7 131,-31.5 126,-32.3 123.5,-33.9 118,-35 115,-34.3 115.8,-31.9 113.5,-26 113.8,-22 117,-20.7 121.5,-19 123.5,-17.3 125.8,-14.3 129.5,-14.9 130.8,-12.4 132.5,-11.4 136.8,-12.2 135.5,-14.8 139.5,-17.6 141,-16.5',
  '172.7,-34.5 175.5,-36.8 175.5,-40 174.5,-40',
];

const WATER = [
  '47,44.7 49.3,46.5 51.2,47 53,46.7 53,45.3 51.2,44.5 50.3,44.4 52.5,42 53.8,39 54,37 51,36.7 49,38 49.3,40.3 47.5,43',
  '58.3,45.5 60.5,46.7 61.5,45.8 59.5,44',
  '103.8,51.6 106,52.4 109.7,55.5 108.5,53.8 106.5,52',
  '30.5,61 32,60 33,61 31.5,61.7',
  '35,62.3 35.5,61 36.3,61.2',
  '76,72 80,73.1 80.5,72.5',
  '-92,46.7 -88.5,48.8 -84.8,46.8 -88,46.9',
  '-87.7,42 -87.7,44.5 -85.5,45.9 -86.3,43 -87,41.7',
  '-84.6,45.8 -80,45.5 -81.7,43.2 -83.5,44',
  '-83.3,41.8 -79,42.9 -81.5,41.8',
  '-79.7,43.4 -76.3,44 -77,43.3',
  '-99,53.8 -97,50.4 -96.5,51 -98,53.5',
  '-101,53 -99.8,51.8 -99.3,52',
  '-117,61.2 -112,62.5 -109.5,62.7 -113,61',
  '-124.5,66.5 -121,66.8 -117.6,66.4 -120,65.8 -123,65.1',
  '-111,59.2 -106,59.4 -108,59',
  '-104,57.8 -102,56.5 -102.6,57.9',
  '-98,64.5 -95,64.2 -97,64',
  '31.7,0 34,0.4 33.8,-2 31.8,-2.4',
  '29.2,-3.5 30.8,-8.5 30,-7',
  '34,-9.8 34.8,-14 34.6,-11',
];

const BORDERS = [
  '-141,69.6 -141,60.3 -137,59 -135,59.5 -130,56 -130,55',
  '-123,49 -95,49 -89,48 -84.5,46.5 -82.5,42 -79,43.2 -75,45 -71,45.2 -68,47.2 -67,45',
  '-117,32.6 -111,31.3 -106.5,31.8 -103,29 -101,29.7 -99.3,26.5 -97.3,25.9',
  '-92,14.6 -91,17.8 -89.2,17.8 -89,16 -87,13.1',
  // Russia, Kazakhstan, Mongolia, China
  '49,46.5 47,48 47,50 52,51.5 58,51 61,51 61,54 70,55.3 77,54 80,51 87,49 91,50.5 98,50 98,52 102,51.5 107,50 113,49.5 117,49.7 120,53 125,53 128,50 131,47.8 135,48.4 131,45 131,42.8',
  '87,49 91,46.5 96,43 105,41.7 111,43.5 116,46.5 120,47 117,49.7',
  '87,49 83,47 80,45 80,42 74,40 74,37 78,35 79,31 88,28 97,28.3 98,24 101,21.3 106,23 108,21.5',
  '97,28 92,22',
  '98,24 99,20 98.5,16 99,12',
  '100.5,20.5 101,18 104,18 105.5,15 103,14.3 102.5,12',
  '102.5,21 105,19 107,16 107.5,12.5 105,10.5',
  '124.3,40 128,42 130.7,42.4',
  '56,41.3 59,42 62,40 66,37.4 71,37 74,37',
  '61,25 62,29 61,31 61,36.5 57,38 54,37.3',
  '62,29.4 66,30 70,33 74,37',
  '68,24 71,25 71,28 75,32 74,35 78,35',
  '81,30 84,28 88,27 89,26 88,24 89,22',
  '48,30 46,33 45,37 44,39.5 48,39 48.5,38.5',
  '36,33 39,33 42,37 44,37',
  '35,29.5 38,30.5 39,32 45,29 48,29',
  '43,17 47,17 52,19 53,16.7',
  '52,19 55,20 56,24',
  // Europe
  '28,71 29,69 29.5,66 31,63 28,60.5',
  '12,58.9 12,61 12.5,64 16,68 20,69 25,69 28,70',
  '24,66 23.5,68 20,69',
  '28,59.5 27.5,57.5 28,56 31,55 32,53 34,52 38,49.7 40,49.5 38,47.2',
  '24,57.7 27.5,57.5',
  '21,56.2 25,56.2 28,56',
  '23.5,54 23.5,52 24,50.5 30,51.5 32,52.3',
  '14.3,54 14.7,51 19,49.5 22.7,49 24,50.5',
  '14.7,51 12.3,50.3 13.5,48.6 17,48.7 22,48.2 27,48.3 30,46.5',
  '6,53 6,51 8,49 7.6,47.6 13,47.5 13.7,46.5 19,46 22,45 22.7,44 28,44',
  '2.5,51 6,49.5 8,49',
  '7,46 7.5,43.8',
  '-1.7,43.3 3,42.4',
  '-7,42 -7,37.2',
  '19.5,42 21,41.3 23,41.4 26,41.5',
  // Africa
  '-2,35 -1.2,32.2 -8.7,28.7 -8.7,27.5 -13,27.6',
  '-8.7,27.3 -4.8,25 3,19 4.2,19 12,23.5 9.5,30 8,33 8.5,36.8',
  '12,23.5 15,23 24,19.5 25,22 37,22',
  '25,22 25,31.5',
  '-17,21 -13,21.3 -13,23.3 -12,26 -8.7,26',
  '-4.8,25 -6.5,25 -5.5,15.5 -12,15 -16,16.4',
  '4.2,19 4,16.5 0,15 -4,13.5 -5.5,10.5 -8,10.3 -11.5,12.4 -13.5,12.6 -16.5,12.4',
  '4,16.5 4,13.5 13.5,13.7 15.5,17 15,23',
  '-3,5.2 -3,11 0,11 1,6',
  '2.7,6.4 2.7,9 3.6,11.7 4,13.5',
  '-8,10 -8,8 -7.5,4.4',
  '13.5,13.7 14.2,10 9,4.5',
  '14,10 15,7.5 14.5,5 16,2.2 10,2.2',
  '24,19.5 24,15.7 22,13 23,9 15,7.5',
  '23,9 27.5,5 31,4 34,4.5 36,4.5 42,4 45,5 48,8 43,11',
  '24,8.7 33,10 34,8 36,4.5',
  '36.4,18 36.5,14 40,14.5 43,12',
  '16,2.2 18,4.5 27.5,5',
  '16,2 16,-2 13,-4.5 12,-5',
  '31,4 30,0 29.5,-4.5 30.5,-8.2 28.5,-9 29,-12.3 24,-11 22,-8 17,-8 16.5,-6 13,-6',
  '41,-1.7 41,3.5',
  '34,-1 37.5,-3 39,-4.6',
  '30.5,-8.2 33,-9.5 34.7,-11.6 40.4,-10.5',
  '22,-13 22,-16.5 23.3,-17.6 14,-17.3 11.8,-17.2',
  '24,-11 22,-13',
  '33,-9.5 33,-14 30,-15.8 25.2,-17.8 29.5,-22 31.3,-22.4 32,-25.8',
  '31.3,-22.4 32.8,-20 33,-17 30.3,-15.8',
  '21,-18 21,-22 20,-22 20,-28.5 16.5,-28.5',
  '20,-25 23,-25.3 25.6,-25.6 29.5,-22',
  // South America
  '-72,12 -73,9 -70,7 -67.5,6 -67,1 -70,-4 -73,-7 -70.5,-9.5 -69,-11 -69,-16 -69.5,-18',
  '-78.8,1.5 -75,-0.5 -80,-4.7',
  '-75,0 -70,-4',
  '-67,1 -63,2 -61,5 -60,8.4',
  '-60,5 -59,2 -54,2.3 -51.8,4.2',
  '-57,6 -57.5,3.5 -58,2',
  '-69,-11 -65.3,-10 -60,-13.5 -60,-16.3 -58,-16.3 -58,-20 -62.5,-22 -67,-22.7 -68,-20 -69,-17.5',
  '-67,-22.7 -69,-27 -70,-33 -71,-39',
  '-58,-20 -55.5,-22.5 -54.5,-25.5 -58,-27 -57.6,-25 -62.5,-22',
  '-54.5,-25.5 -54,-27 -57.6,-30 -58,-34',
  '-57.6,-30 -53.5,-33.5',
  '141,-2.6 141,-9',
];

const DEG = 687 / 360;

function project(pair) {
  const [lon, lat] = pair.split(',').map(Number);
  const x = 720 + lon * DEG;
  const y = 643.6 - 109.3 * Math.asinh(Math.tan((lat * Math.PI) / 180));
  return [x, y];
}

// Breaks long coast segments into small uneven steps
function coast(shape) {
  const pts = shape.split(' ').map(project);
  const out = [];
  pts.forEach(([x, y], i) => {
    const [nx, ny] = pts[(i + 1) % pts.length];
    const len = Math.hypot(nx - x, ny - y);
    const n = Math.max(1, Math.round(len / 3));
    out.push([x, y]);
    for (let k = 1; k < n; k++) {
      const seed = Math.sin(x * 12.9 + y * 78.2 + k * 37.7) * 43758.5;
      const off = (seed - Math.floor(seed) - 0.5) * (y < 520 ? 2.6 : 1.4);
      out.push([x + ((nx - x) * k) / n - ((ny - y) / len) * off, y + ((ny - y) * k) / n + ((nx - x) / len) * off]);
    }
  });
  return 'M' + out.map(([x, y]) => `${x.toFixed(1)} ${y.toFixed(1)}`).join('L') + 'Z';
}

const landPath = LAND.map(coast).join('');
const waterPath = WATER.map(coast).join('');
const borderPath = BORDERS.map((b) => 'M' + b.split(' ').map((p) => project(p).map((n) => n.toFixed(1)).join(' ')).join('L')).join('');

// x, y, radius
const BUBBLES = [
  [487, 541, 10], [491.5, 546, 7], [488, 568, 10], [520, 562, 6], [537, 546, 6], [535, 566, 10], [540, 564, 7], [538, 556, 5], [536, 578, 6],
  [553, 556, 7], [562, 562, 6], [573, 564, 10], [578, 559, 6], [564, 572, 6], [559, 576, 6], [567.5, 593.5, 6], [531, 607, 4], [579, 635.5, 6.5],
  [634.5, 690, 6], [609, 715, 6.5], [754.5, 503, 6], [744.5, 516.5, 6], [792, 516, 6.5], [708, 524, 6], [718, 526, 6], [730, 526, 7],
  [728.5, 531, 6], [739, 532, 7], [760.5, 527, 6], [752, 539, 7], [727.5, 540, 6.5], [736.5, 541.5, 6], [738, 546, 6], [702.5, 564, 6],
  [713, 560, 6.5], [867, 552.5, 4.5], [786.5, 580, 6], [795, 602, 6.5], [825.5, 595, 6], [864.5, 609, 7], [717, 635, 6], [727, 631.5, 6.5],
  [774, 696, 6], [962.5, 567.5, 6], [984.5, 572, 6], [941.5, 578.5, 6], [952.5, 595, 6], [938.5, 601, 6], [918, 642, 6.5], [982.5, 715, 6], [1054, 721, 6],
];

const TOP = [
  ['California', '3.21%'],
  ['Kansas', '3.21%'],
  ['Virginia', '3.21%'],
  ['Washington', '3.21%'],
  ['Austria', '2.67%'],
];

function RiskMap() {
  return (
    <div className="relative mt-[10px] overflow-hidden rounded bg-[#262626]">
      <svg viewBox="181 393 1079 325" preserveAspectRatio="xMidYMid slice" className="h-[325px] w-full">
        <defs>
          <g id="world">
            <path d={landPath} fill="#080808" />
            <path d={waterPath} fill="#262626" />
            <path d={borderPath} fill="none" stroke="#1f1f1f" strokeWidth="0.800" />
          </g>
        </defs>
        <use href="#world" x="-687" />
        <use href="#world" />
        <use href="#world" x="687" />
        <g fill="#4673cf" fillOpacity="0.400" stroke="#85aaf3" strokeWidth="2.200">
          {BUBBLES.map(([x, y, r]) => (
            <circle key={x + '-' + y} cx={x} cy={y} r={r} />
          ))}
        </g>
      </svg>

      <p className="absolute top-2 left-2 text-[7px] leading-[11px] font-semibold text-[#8d929b]">
        Event Count Drives the Size of Bubbles
        <br />
        Unknown Regions Risk Events:0
      </p>

      <div className="absolute bottom-[6px] left-[7px] w-[129px] rounded-[2px] bg-[#1b2540] px-[10px] pt-2 pb-[3px] text-[#e3e8f3]">
        <table className="w-full text-[7px] font-semibold">
          <caption className="h-[15px] text-[9px] font-medium">Top Risky Locations</caption>
          <tbody>
            {TOP.map(([place, pct]) => (
              <tr key={place} className="h-[19px]">
                <td>{place}</td>
                <td className="text-right">{pct}</td>
              </tr>
            ))}
          </tbody>
        </table>
      </div>

      <div className="absolute right-[7px] bottom-6 flex w-[23px] flex-col overflow-hidden rounded-[2px] border border-[#666e80] bg-[#1b2540]">
        <button aria-label="Zoom in" className="flex h-[21px] items-center justify-center border-b border-[#4b5468] pt-1 text-[#6fa2f2]">
          <svg viewBox="0 0 10 10" className="size-[10px]" stroke="currentColor" strokeWidth="2"><path d="M5 .5v9M.5 5h9" /></svg>
        </button>
        <button aria-label="Zoom out" className="flex h-5 items-center justify-center pt-1 text-[#b4bfd6]">
          <svg viewBox="0 0 10 10" className="size-[10px]" stroke="currentColor" strokeWidth="2"><path d="M.5 5h9" /></svg>
        </button>
      </div>

      <div className="absolute right-0 bottom-0 flex h-4 items-end gap-1 bg-[#cfcfcf] px-[3px] pb-px font-['Liberation_Sans',sans-serif] text-[7px] leading-[11px] text-[#333]">
        <svg viewBox="0 0 9 6" className="absolute top-0 left-[3px] h-[6px] w-[9px]">
          <path d="M0 0h9v3H0z" fill="#5783cc" />
          <path d="M0 3h9v3H0z" fill="#ecd24a" />
        </svg>
        <a href="#leaflet" className="text-[#147896]">Leaflet</a>
        <span>| ©</span>
        <a href="#osm" className="text-[#147896]">OpenStreetMap</a>
        <span>contributors ©</span>
        <a href="#carto" className="text-[#147896]">CARTO</a>
      </div>
    </div>
  );
}

/* ---------- page ---------- */

export default function App() {
  return (
    <div className="relative flex min-h-screen flex-col overflow-hidden bg-[#070c21] font-['Inter',sans-serif] text-white">
      <Header />
      <div className="flex flex-1">
        <Sidebar />
        <main className="min-w-0 flex-1 pt-[9px] pr-5 pb-0.5 pl-6">
          <h1 className="-ml-[13px] h-6 text-[16px] leading-6 font-semibold text-[#e6eaf4]">Risk360</h1>
          <div className="mt-[17px] grid grid-cols-2 gap-[14px] pr-[3px]">
            <RiskScoreCard />
            <TrendCard />
          </div>
          <h2 className="mt-6 h-5 text-[13px] leading-5 font-semibold text-[#e6eaf4]">Risk Events by Location</h2>
          <RiskMap />
        </main>
      </div>

      {/* link preview and pointer */}
      <div className="absolute bottom-px left-0 h-3 border border-[#4b4b4b] bg-[#1c1e22] pr-1 font-['Noto_Sans',sans-serif] text-[8px] leading-[10px] text-[#c9cbcf]">
        https://console.zscaler.com/analytics/risk360
      </div>
      <svg viewBox="0 0 16 26" className="pointer-events-none absolute top-[254px] left-[219px] h-[26px] w-4">
        <path d="M1.500 1.500v19.500l4.500-4.200 3 7.200 3.800-1.600-3-7h5.500z" fill="#000" stroke="#fff" strokeWidth="1.500" strokeLinejoin="round" />
      </svg>
      <span className="absolute -top-[2px] -right-[1px] size-[5px] rounded-full bg-[#e9963a]" />
    </div>
  );
}
